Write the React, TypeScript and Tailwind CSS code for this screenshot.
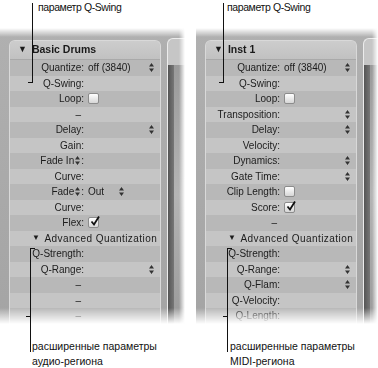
import React from "react";

type Row = {
  label: React.ReactNode;
  value?: React.ReactNode;
  arrows?: boolean;
  section?: boolean;
};

const UpDown = ({ className = "" }: { className?: string }) => (
  <svg width="5" height="9" viewBox="0 0 5 9" className={"inline-block " + className}>
    <path d="M2.5 0 L5 3.5 H0Z M0 5.5 H5 L2.5 9Z" fill="#333" />
  </svg>
);

const Check = ({ on = false }: { on?: boolean }) => (
  <div className="relative h-[11px] w-[11px] rounded-[2px] border border-[#8c8c8c] bg-gradient-to-b from-white to-[#d6d6d6]">
    {on && (
      <svg width="12" height="12" viewBox="0 0 12 12" className="absolute left-[0px] top-[-3px]">
        <path d="M2.5 6.5 L5 9.5 L10 1.5" fill="none" stroke="#111" strokeWidth="1.8" />
      </svg>
    )}
  </div>
);

const audioRows: Row[] = [
  { label: "Quantize:", value: "off (3840)", arrows: true },
  { label: "Q-Swing:" },
  { label: "Loop:", value: <Check /> },
  { label: "–" },
  { label: "Delay:", arrows: true },
  { label: "Gain:" },
  { label: <>Fade In <UpDown className="mx-[1px]" />:</> },
  { label: "Curve:" },
  {
    label: <>Fade <UpDown className="mx-[1px]" />:</>,
    value: (
      <span className="flex items-center gap-[15px]">
        Out <UpDown />
      </span>
    ),
  },
  { label: "Curve:" },
  { label: "Flex:", value: <Check on /> },
  { label: "Advanced Quantization", section: true },
  { label: "Q-Strength:" },
  { label: "Q-Range:", arrows: true },
  { label: "–" },
  { label: "–" },
  { label: "–" },
];

const midiRows: Row[] = [
  { label: "Quantize:", value: "off (3840)", arrows: true },
  { label: "Q-Swing:" },
  { label: "Loop:", value: <Check /> },
  { label: "Transposition:", arrows: true },
  { label: "Delay:", arrows: true },
  { label: "Velocity:" },
  { label: "Dynamics:", arrows: true },
  { label: "Gate Time:", arrows: true },
  { label: "Clip Length:", value: <Check /> },
  { label: "Score:", value: <Check on /> },
  { label: "–" },
  { label: "Advanced Quantization", section: true },
  { label: "Q-Strength:" },
  { label: "Q-Range:", arrows: true },
  { label: "Q-Flam:", arrows: true },
  { label: "Q-Velocity:" },
  { label: "Q-Length:" },
];

const Inspector = ({ title, rows }: { title: string; rows: Row[] }) => (
  <div className="h-[296px] [mask-image:linear-gradient(to_bottom,transparent_0px,black_9px,black_calc(100%-16px),transparent_100%)]">
    <div className="flex h-full bg-gradient-to-b from-[#b0b0b0] to-[#a4a4a4] pl-[9px] pt-[12px] [mask-image:linear-gradient(to_right,black_calc(100%-6px),transparent_100%)]">
      <div className="w-[152px] overflow-hidden rounded-t-[6px] border border-b-0 border-[#d9d9d9] bg-[#c2c2c2]">
        <div className="flex h-[19px] items-center gap-[5px] border-b border-[#a9a9a9] bg-gradient-to-b from-[#cdcdcd] to-[#c1c1c1] pl-[8px] text-[10.5px] font-bold text-[#1a1a1a]">
          <span className="text-[9px]">▼</span>
          {title}
        </div>
        {rows.map((r, i) => (
          <div
            key={i}
            className={
              "flex h-[15.5px] items-center " + (i % 2 === 0 ? "bg-[#b8b8b8]" : "bg-[#c5c5c5]")
            }
          >
            {r.section ? (
              <div className="flex items-center gap-[4px] pl-[22px] tracking-[0.45px]">
                <span className="text-[8px]">▼</span>
                {r.label}
              </div>
            ) : (
              <>
                <div className="flex w-[74px] shrink-0 items-center justify-end whitespace-nowrap">
                  {r.label}
                  {r.label === "–" && <span className="w-[3px]" />}
                </div>
                <div className="ml-[4px] flex flex-1 items-center whitespace-nowrap">{r.value}</div>
                {r.arrows && <UpDown className="mr-[6px]" />}
              </>
            )}
          </div>
        ))}
      </div>
      <div className="ml-[6px] mt-[-2px] flex flex-1 flex-col rounded-tl-[6px] border-l border-t border-[#ececec] bg-[#c6c6c6]">
        <div className="h-[26px]" />
        <div className="flex flex-1">
          <div className="w-[6px] bg-gradient-to-r from-[#555] to-[#777]" />
          <div className="flex-1 bg-gradient-to-b from-[#9a9a9a] via-[#b4b4b4] to-[#9a9a9a]" />
        </div>
      </div>
    </div>
  </div>
);

const Column = ({
  title,
  rows,
  width,
  topLine,
  topText,
  botLine,
  botText,
  caption,
}: {
  title: string;
  rows: Row[];
  width: string;
  topLine: number;
  topText: number;
  botLine: number;
  botText: number;
  caption: string;
}) => (
  <div className={"relative shrink-0 " + width}>
    <div className="h-[28px] pt-[1px] text-[10.5px] leading-[12px] tracking-[-0.4px] text-[#111]" style={{ paddingLeft: topText }}>
      параметр Q-Swing
    </div>
    <Inspector title={title} rows={rows} />
    <div className="pt-[15px] text-[10.5px] leading-[15px] text-[#111]" style={{ paddingLeft: botText }}>
      <div>расширенные параметры</div>
      <div>{caption}</div>
    </div>

    {/* leader lines */}
    <div className="absolute top-[3px] h-[80px] w-px bg-[#111]" style={{ left: topLine }} />
    <div className="absolute top-[82px] h-px w-[5px] bg-[#111]" style={{ left: topLine - 4 }} />
    <div className="absolute top-[248px] h-[104px] w-px bg-[#111]" style={{ left: botLine }} />
    <div className="absolute top-[248px] h-px w-[5px] bg-[#111]" style={{ left: botLine }} />
    <div className="absolute top-[316px] h-px w-[5px] bg-[#111]" style={{ left: botLine - 4 }} />
  </div>
);

export default function App() {
  return (
    <div className="flex h-[368px] w-[378px] gap-[11px] overflow-hidden bg-white font-['Liberation_Sans',Arial,sans-serif] text-[10px] text-[#1c1c1c]">
      <Column
        title="Basic Drums"
        rows={audioRows}
        width="w-[185px]"
        topLine={32}
        topText={38}
        botLine={30}
        botText={32}
        caption="аудио-региона"
      />
      <Column
        title="Inst 1"
        rows={midiRows}
        width="w-[182px]"
        topLine={27}
        topText={31}
        botLine={31}
        botText={34}
        caption="MIDI-региона"
      />
    </div>
  );
}
